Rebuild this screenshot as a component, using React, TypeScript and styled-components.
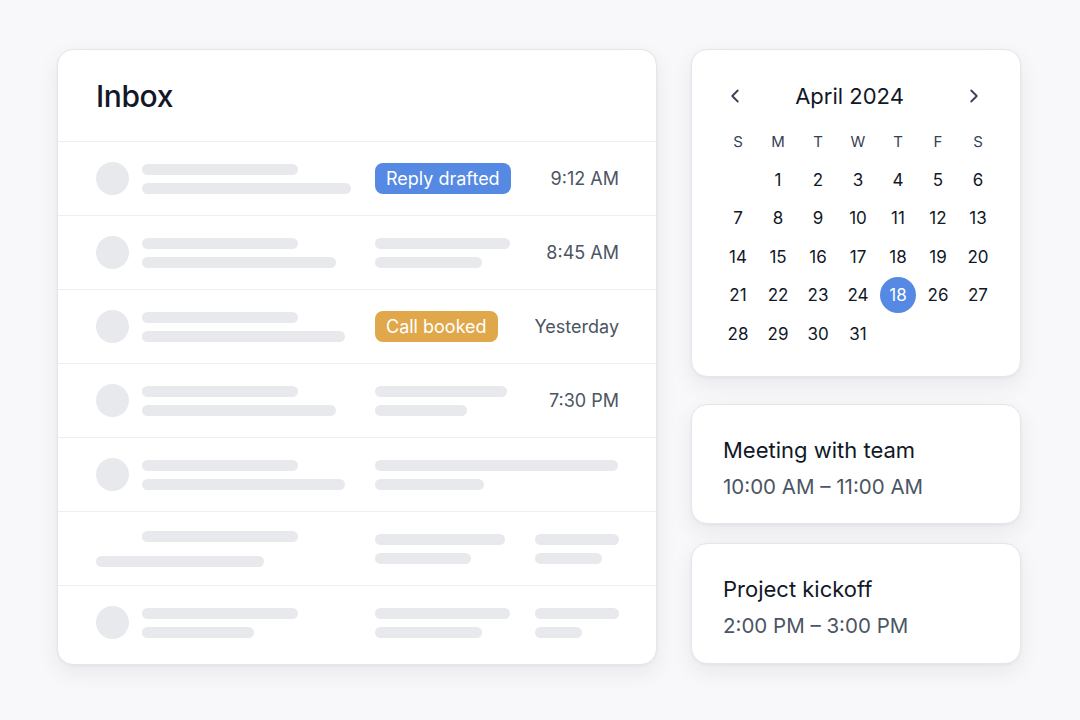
import React from 'react';
import styled, { createGlobalStyle } from 'styled-components';
import { ChevronLeft, ChevronRight } from 'lucide-react';

const GlobalStyle = createGlobalStyle`
    html, body {
        margin: 0;
        padding: 0;
        background: #f8f8fa;
        font-family: Inter, "Noto Sans", "Liberation Sans", sans-serif;
        color: #111827;
    }
`;

const Page = styled.div`
    display: flex;
    align-items: flex-start;
    gap: 34px;
    padding: 49px 0 0 57px;
    width: 1080px;
    height: 720px;
    box-sizing: border-box;
`;

const Card = styled.div`
    background: #ffffff;
    border: 1px solid #e5e6eb;
    border-radius: 16px;
    box-shadow: 0 8px 22px rgba(30, 35, 60, 0.07), 0 1px 3px rgba(30, 35, 60, 0.05);
    box-sizing: border-box;
`;

const InboxCard = styled(Card)`
    width: 600px;
    height: 616px;
    padding-bottom: 5px;
    display: flex;
    flex-direction: column;
    overflow: hidden;
`;

const InboxHeader = styled.div`
    height: 91px;
    display: flex;
    align-items: center;
    padding: 0 0 0 38px;
    box-sizing: border-box;
`;

const InboxTitle = styled.h1`
    margin: 0;
    font-size: 30px;
    font-weight: 500;
    letter-spacing: -0.4px;
    color: #111827;
`;

const Row = styled.div`
    height: 74px;
    border-top: 1px solid #eeeff2;
    box-sizing: border-box;
    display: grid;
    grid-template-columns: 46px 233px 160px 84px;
    align-items: center;
    padding: 0 0 0 38px;
`;

const Avatar = styled.div`
    width: 33px;
    height: 33px;
    border-radius: 50%;
    background: #e8e9ed;
`;

const Lines = styled.div<{ $span?: string; $gap?: number }>`
    grid-column: ${(p) => p.$span || 'auto'};
    display: flex;
    flex-direction: column;
    gap: ${(p) => p.$gap ?? 8}px;
`;

const Bar = styled.div<{ $w: number; $indent?: number }>`
    width: ${(p) => p.$w}px;
    height: 11px;
    margin-left: ${(p) => p.$indent || 0}px;
    border-radius: 6px;
    background: #e8e9ed;
`;

const Badge = styled.span<{ $tone: 'blue' | 'amber' }>`
    justify-self: start;
    height: 31px;
    display: inline-flex;
    align-items: center;
    padding: 0 11px;
    border-radius: 8px;
    font-size: 18px;
    color: #ffffff;
    background: ${(p) => (p.$tone === 'blue' ? '#5589e3' : '#e0a84a')};
`;

const Time = styled.span`
    grid-column: 4;
    justify-self: end;
    white-space: nowrap;
    font-size: 18px;
    color: #4b5563;
`;

const SideColumn = styled.div`
    width: 330px;
    display: flex;
    flex-direction: column;
`;

const CalendarCard = styled(Card)`
    height: 328px;
    padding: 28px 23px 0 26px;
`;

const CalendarHeader = styled.div`
    display: grid;
    grid-template-columns: 34px 1fr 34px;
    align-items: center;
    height: 36px;
    margin: 0 6px 8px 0;
    color: #374151;
`;

const NavIcon = styled.span`
    display: flex;
    justify-content: center;
`;

const MonthTitle = styled.div`
    text-align: center;
    font-size: 22px;
    color: #111827;
    padding-right: 10px;
`;

const DayGrid = styled.div`
    display: grid;
    grid-template-columns: repeat(7, 40px);
    grid-auto-rows: 38.5px;
    align-items: center;
    justify-items: center;
`;

const Weekday = styled.span`
    font-size: 15px;
    color: #374151;
`;

const DayCell = styled.span<{ $selected?: boolean }>`
    width: 36px;
    height: 36px;
    border-radius: 50%;
    display: flex;
    align-items: center;
    justify-content: center;
    font-size: 17px;
    color: ${(p) => (p.$selected ? '#ffffff' : '#111827')};
    background: ${(p) => (p.$selected ? '#5589e3' : 'transparent')};
`;

const EventCard = styled(Card)<{ $top: number; $h: number }>`
    height: ${(p) => p.$h}px;
    margin-top: ${(p) => p.$top}px;
    padding: 31px 0 0 31px;
`;

const EventTitle = styled.div`
    font-size: 22px;
    line-height: 28px;
    color: #111827;
`;

const EventTime = styled.div`
    margin-top: 10px;
    font-size: 20.5px;
    line-height: 26px;
    color: #4b5563;
`;

type Skeleton = { span?: string; gap?: number; bars: { w: number; indent?: number }[] };

type Message = {
    avatar: boolean;
    left: Skeleton;
    badge?: { label: string; tone: 'blue' | 'amber' };
    middle?: Skeleton;
    right?: Skeleton;
    time?: string;
};

const messages: Message[] = [
    {
        avatar: true,
        left: { bars: [{ w: 156 }, { w: 209 }] },
        badge: { label: 'Reply drafted', tone: 'blue' },
        time: '9:12 AM',
    },
    {
        avatar: true,
        left: { bars: [{ w: 156 }, { w: 194 }] },
        middle: { bars: [{ w: 135 }, { w: 107 }] },
        time: '8:45 AM',
    },
    {
        avatar: true,
        left: { bars: [{ w: 156 }, { w: 203 }] },
        badge: { label: 'Call booked', tone: 'amber' },
        time: 'Yesterday',
    },
    {
        avatar: true,
        left: { bars: [{ w: 156 }, { w: 194 }] },
        middle: { bars: [{ w: 132 }, { w: 92 }] },
        time: '7:30 PM',
    },
    {
        avatar: true,
        left: { bars: [{ w: 156 }, { w: 203 }] },
        middle: { span: '3 / 5', bars: [{ w: 243 }, { w: 109 }] },
    },
    {
        avatar: false,
        left: { span: '1 / 3', gap: 14, bars: [{ w: 156, indent: 46 }, { w: 168 }] },
        middle: { bars: [{ w: 130 }, { w: 96 }] },
        right: { bars: [{ w: 84 }, { w: 67 }] },
    },
    {
        avatar: true,
        left: { bars: [{ w: 156 }, { w: 112 }] },
        middle: { bars: [{ w: 135 }, { w: 107 }] },
        right: { bars: [{ w: 84 }, { w: 47 }] },
    },
];

const renderSkeleton = (s: Skeleton) => (
    <Lines $span={s.span} $gap={s.gap}>
        {s.bars.map((b, i) => (
            <Bar key={i} $w={b.w} $indent={b.indent} />
        ))}
    </Lines>
);

const weekdays = ['S', 'M', 'T', 'W', 'T', 'F', 'S'];
const days: (number | null)[] = [
    null, 1, 2, 3, 4, 5, 6,
    7, 8, 9, 10, 11, 12, 13,
    14, 15, 16, 17, 18, 19, 20,
    21, 22, 23, 24, 18, 26, 27,
    28, 29, 30, 31,
];
const selectedIndex = 25;

const events = [
    { title: 'Meeting with team', time: '10:00 AM – 11:00 AM', top: 27, h: 120 },
    { title: 'Project kickoff', time: '2:00 PM – 3:00 PM', top: 19, h: 121 },
];

const App: React.FC = () => {
    return (
        <>
            <GlobalStyle />
            <Page>
                <InboxCard>
                    <InboxHeader>
                        <InboxTitle>Inbox</InboxTitle>
                    </InboxHeader>
                    {messages.map((m, i) => (
                        <Row key={i}>
                            {m.avatar && <Avatar />}
                            {renderSkeleton(m.left)}
                            {m.badge && <Badge $tone={m.badge.tone}>{m.badge.label}</Badge>}
                            {m.middle && renderSkeleton(m.middle)}
                            {m.right && renderSkeleton(m.right)}
                            {m.time && <Time>{m.time}</Time>}
                        </Row>
                    ))}
                </InboxCard>

                <SideColumn>
                    <CalendarCard>
                        <CalendarHeader>
                            <NavIcon>
                                <ChevronLeft size={22} strokeWidth={2} />
                            </NavIcon>
                            <MonthTitle>April 2024</MonthTitle>
                            <NavIcon>
                                <ChevronRight size={22} strokeWidth={2} />
                            </NavIcon>
                        </CalendarHeader>
                        <DayGrid>
                            {weekdays.map((d, i) => (
                                <Weekday key={`w${i}`}>{d}</Weekday>
                            ))}
                            {days.map((d, i) => (
                                <DayCell key={`d${i}`} $selected={i === selectedIndex}>
                                    {d ?? ''}
                                </DayCell>
                            ))}
                        </DayGrid>
                    </CalendarCard>

                    {events.map((e) => (
                        <EventCard key={e.title} $top={e.top} $h={e.h}>
                            <EventTitle>{e.title}</EventTitle>
                            <EventTime>{e.time}</EventTime>
                        </EventCard>
                    ))}
                </SideColumn>
            </Page>
        </>
    );
};

export default App;
